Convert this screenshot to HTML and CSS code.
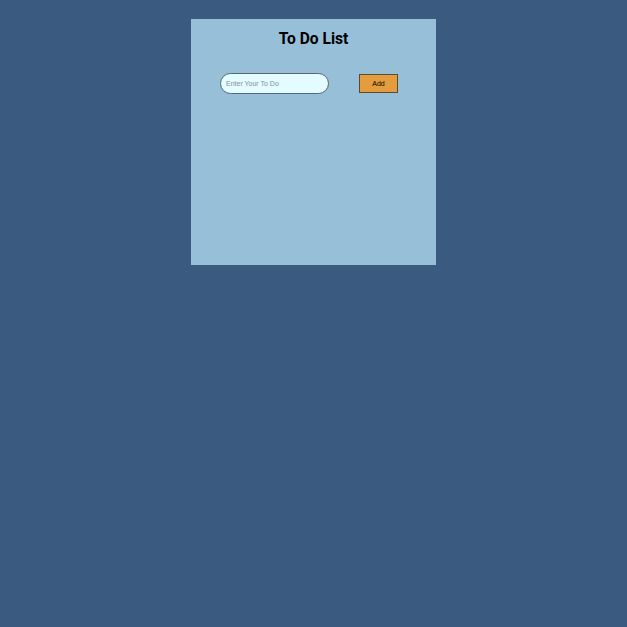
FILE: index.html
```html
<!DOCTYPE html>
<html>
<head>
<meta charset="utf-8">
<link rel="stylesheet" href="styles.css">
</head>
<body>
<div class="card">
  <h1 class="title">To Do List</h1>
  <div class="row">
    <input class="todo-input" type="text" placeholder="Enter Your To Do">
    <button class="add-btn">Add</button>
  </div>
</div>
</body>
</html>
```
FILE: styles.css
```css
html, body {
  margin: 0;
  padding: 0;
  background: #3b5a7f;
  height: 100%;
}
body {
  padding-top: 19px;
  box-sizing: border-box;
  font-family: Roboto, "Liberation Sans", sans-serif;
}
.card {
  width: 245px;
  height: 246px;
  margin: 0 auto;
  background: #98bfd8;
  box-sizing: border-box;
  padding-top: 11px;
}
.title {
  margin: 0;
  text-align: center;
  font-size: 15.6px;
  font-weight: 700;
  color: #000;
  line-height: 18px;
}
.row {
  display: flex;
  align-items: center;
  padding-left: 29px;
  margin-top: 25px;
  gap: 30px;
}
.todo-input {
  width: 109px;
  height: 21px;
  box-sizing: border-box;
  border: 1px solid #556677;
  border-radius: 11px;
  background: #e2fcff;
  padding: 0 5px;
  font-family: "Liberation Sans", Arial, sans-serif;
  font-size: 7px;
  outline: none;
}
.todo-input::placeholder {
  color: #8a9099;
}
.add-btn {
  width: 39px;
  height: 19px;
  box-sizing: border-box;
  background: #e39d3e;
  border: 1px solid #5a4a30;
  font-family: "Liberation Sans", Arial, sans-serif;
  font-size: 7px;
  color: #000;
  padding: 0;
}
```
